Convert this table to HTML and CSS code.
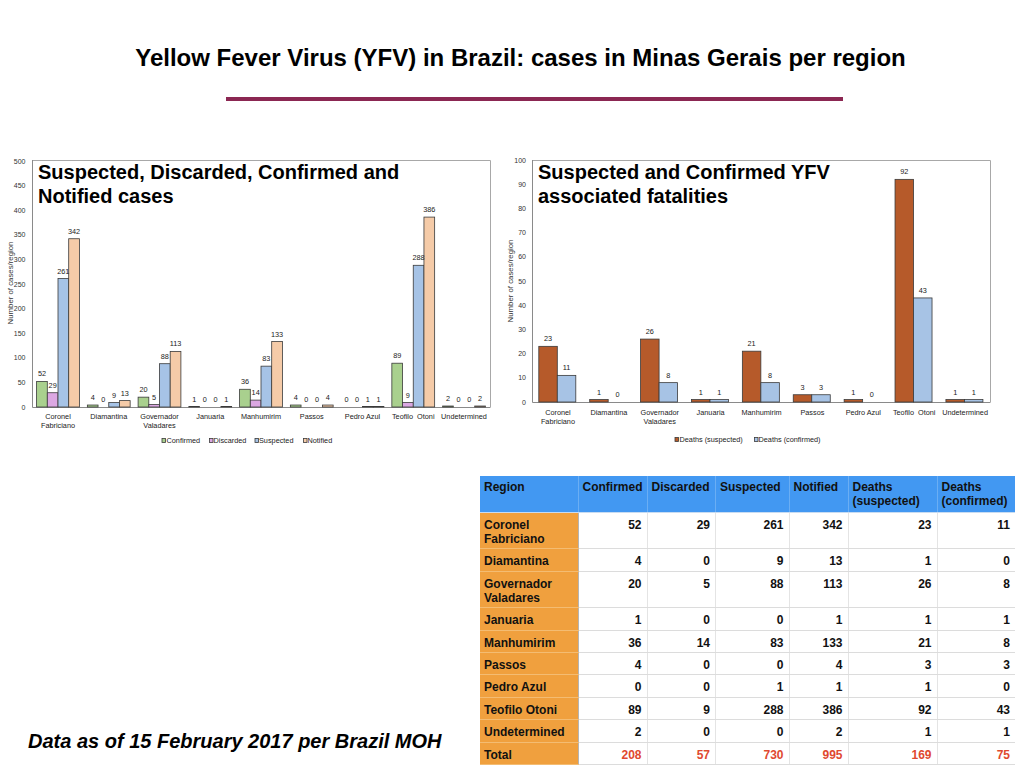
FILE: index.html
```html
<!DOCTYPE html>
<html lang="en">
<head>
<meta charset="utf-8">
<title>Yellow Fever Virus (YFV) in Brazil</title>
<link rel="stylesheet" href="styles.css">
</head>
<body>
<header class="head">
  <h1 class="title">Yellow Fever Virus (YFV) in Brazil: cases in Minas Gerais per region</h1>
  <div class="rule"></div>
</header>

<section class="charts">
  <svg class="chart" width="500" height="300" viewBox="0 150 500 300">
    <line class="frame" x1="32.5" y1="160.5" x2="490.5" y2="160.5"/>
    <line class="frame" x1="490.5" y1="160.5" x2="490.5" y2="407"/>
    <line class="axis" x1="32.5" y1="160" x2="32.5" y2="407.5"/>
    <line class="axis" x1="32.5" y1="407.5" x2="490.5" y2="407.5"/>

    <g class="tick">
      <text x="25.5" y="409.5">0</text>
      <text x="25.5" y="384.9">50</text>
      <text x="25.5" y="360.3">100</text>
      <text x="25.5" y="335.7">150</text>
      <text x="25.5" y="311.1">200</text>
      <text x="25.5" y="286.5">250</text>
      <text x="25.5" y="261.9">300</text>
      <text x="25.5" y="237.3">350</text>
      <text x="25.5" y="212.7">400</text>
      <text x="25.5" y="188.1">450</text>
      <text x="25.5" y="163.5">500</text>
    </g>
    <text class="axt" transform="translate(12.5 283) rotate(-90)">Number of cases/region</text>

    <text class="ttl" x="38" y="179">Suspected, Discarded, Confirmed and</text>
    <text class="ttl" x="38" y="203">Notified cases</text>

    <g class="bars">
      <rect class="c-conf" x="36.6" y="381.42" width="10.7" height="25.58"/>
      <rect class="c-disc" x="47.3" y="392.73" width="10.7" height="14.27"/>
      <rect class="c-susp" x="58.0" y="278.59" width="10.7" height="128.41"/>
      <rect class="c-noti" x="68.7" y="238.74" width="10.7" height="168.26"/>

      <rect class="c-conf" x="87.35" y="405.03" width="10.7" height="1.97"/>
      <rect class="c-susp" x="108.75" y="402.57" width="10.7" height="4.43"/>
      <rect class="c-noti" x="119.45" y="400.6" width="10.7" height="6.4"/>

      <rect class="c-conf" x="138.1" y="397.16" width="10.7" height="9.84"/>
      <rect class="c-disc" x="148.8" y="404.54" width="10.7" height="2.46"/>
      <rect class="c-susp" x="159.5" y="363.7" width="10.7" height="43.3"/>
      <rect class="c-noti" x="170.2" y="351.4" width="10.7" height="55.6"/>

      <rect class="c-conf" x="188.85" y="406.51" width="10.7" height="0.49"/>
      <rect class="c-noti" x="220.95" y="406.51" width="10.7" height="0.49"/>

      <rect class="c-conf" x="239.6" y="389.29" width="10.7" height="17.71"/>
      <rect class="c-disc" x="250.3" y="400.11" width="10.7" height="6.89"/>
      <rect class="c-susp" x="261.0" y="366.16" width="10.7" height="40.84"/>
      <rect class="c-noti" x="271.7" y="341.56" width="10.7" height="65.44"/>

      <rect class="c-conf" x="290.35" y="405.03" width="10.7" height="1.97"/>
      <rect class="c-noti" x="322.45" y="405.03" width="10.7" height="1.97"/>

      <rect class="c-susp" x="362.5" y="406.51" width="10.7" height="0.49"/>
      <rect class="c-noti" x="373.2" y="406.51" width="10.7" height="0.49"/>

      <rect class="c-conf" x="391.85" y="363.21" width="10.7" height="43.79"/>
      <rect class="c-disc" x="402.55" y="402.57" width="10.7" height="4.43"/>
      <rect class="c-susp" x="413.25" y="265.3" width="10.7" height="141.7"/>
      <rect class="c-noti" x="423.95" y="217.09" width="10.7" height="189.91"/>

      <rect class="c-conf" x="442.6" y="406.02" width="10.7" height="0.98"/>
      <rect class="c-noti" x="474.7" y="406.02" width="10.7" height="0.98"/>
    </g>

    <g class="val">
      <text x="41.95" y="376.4">52</text>
      <text x="52.65" y="387.7">29</text>
      <text x="63.35" y="273.6">261</text>
      <text x="74.05" y="233.7">342</text>

      <text x="92.7" y="400">4</text>
      <text x="103.4" y="402">0</text>
      <text x="114.1" y="397.6">9</text>
      <text x="124.8" y="395.6">13</text>

      <text x="143.45" y="392.2">20</text>
      <text x="154.15" y="399.5">5</text>
      <text x="164.85" y="358.7">88</text>
      <text x="175.55" y="346.4">113</text>

      <text x="194.2" y="401.5">1</text>
      <text x="204.9" y="402">0</text>
      <text x="215.6" y="402">0</text>
      <text x="226.3" y="401.5">1</text>

      <text x="244.95" y="384.3">36</text>
      <text x="255.65" y="395.1">14</text>
      <text x="266.35" y="361.2">83</text>
      <text x="277.05" y="336.6">133</text>

      <text x="295.7" y="400">4</text>
      <text x="306.4" y="402">0</text>
      <text x="317.1" y="402">0</text>
      <text x="327.8" y="400">4</text>

      <text x="346.45" y="402">0</text>
      <text x="357.15" y="402">0</text>
      <text x="367.85" y="401.5">1</text>
      <text x="378.55" y="401.5">1</text>

      <text x="397.2" y="358.2">89</text>
      <text x="407.9" y="397.6">9</text>
      <text x="418.6" y="260.3">288</text>
      <text x="429.3" y="212.1">386</text>

      <text x="447.95" y="401">2</text>
      <text x="458.65" y="402">0</text>
      <text x="469.35" y="402">0</text>
      <text x="480.05" y="401">2</text>
    </g>

    <g class="cat">
      <text x="58" y="419">Coronel</text>
      <text x="58" y="428">Fabriciano</text>
      <text x="108.75" y="419">Diamantina</text>
      <text x="159.5" y="419">Governador</text>
      <text x="159.5" y="428">Valadares</text>
      <text x="210.25" y="419">Januaria</text>
      <text x="261" y="419">Manhumirim</text>
      <text x="311.75" y="419">Passos</text>
      <text x="362.5" y="419">Pedro Azul</text>
      <text x="413.25" y="419">Teofilo  Otoni</text>
      <text x="464" y="419">Undetermined</text>
    </g>

    <g class="leg">
      <rect class="c-conf" x="162" y="438.5" width="3.5" height="4"/>
      <text x="166.5" y="443">Confirmed</text>
      <rect class="c-disc" x="209.5" y="438.5" width="3.5" height="4"/>
      <text x="213.5" y="443">Discarded</text>
      <rect class="c-susp" x="255" y="438.5" width="3.5" height="4"/>
      <text x="259" y="443">Suspected</text>
      <rect class="c-noti" x="303.5" y="438.5" width="3.5" height="4"/>
      <text x="307.5" y="443">Notified</text>
    </g>
  </svg>

  <svg class="chart" width="510" height="300" viewBox="500 150 510 300">
    <line class="frame" x1="532.5" y1="160.5" x2="990.5" y2="160.5"/>
    <line class="frame" x1="990.5" y1="160.5" x2="990.5" y2="402"/>
    <line class="axis" x1="532.5" y1="160" x2="532.5" y2="402.5"/>
    <line class="axis" x1="532.5" y1="402.5" x2="990.5" y2="402.5"/>

    <g class="tick">
      <text x="526" y="404.5">0</text>
      <text x="526" y="380.3">10</text>
      <text x="526" y="356.1">20</text>
      <text x="526" y="331.9">30</text>
      <text x="526" y="307.7">40</text>
      <text x="526" y="283.5">50</text>
      <text x="526" y="259.3">60</text>
      <text x="526" y="235.1">70</text>
      <text x="526" y="210.9">80</text>
      <text x="526" y="186.7">90</text>
      <text x="526" y="162.5">100</text>
    </g>
    <text class="axt" transform="translate(512.5 281) rotate(-90)">Number of cases/region</text>

    <text class="ttl" x="538" y="179">Suspected and Confirmed YFV</text>
    <text class="ttl" x="538" y="203">associated fatalities</text>

    <g class="bars">
      <rect class="d-susp" x="538.8" y="346.34" width="18.5" height="55.66"/>
      <rect class="d-conf" x="557.3" y="375.38" width="18.5" height="26.62"/>

      <rect class="d-susp" x="589.69" y="399.58" width="18.5" height="2.42"/>

      <rect class="d-susp" x="640.58" y="339.08" width="18.5" height="62.92"/>
      <rect class="d-conf" x="659.08" y="382.64" width="18.5" height="19.36"/>

      <rect class="d-susp" x="691.47" y="399.58" width="18.5" height="2.42"/>
      <rect class="d-conf" x="709.97" y="399.58" width="18.5" height="2.42"/>

      <rect class="d-susp" x="742.36" y="351.18" width="18.5" height="50.82"/>
      <rect class="d-conf" x="760.86" y="382.64" width="18.5" height="19.36"/>

      <rect class="d-susp" x="793.25" y="394.74" width="18.5" height="7.26"/>
      <rect class="d-conf" x="811.75" y="394.74" width="18.5" height="7.26"/>

      <rect class="d-susp" x="844.14" y="399.58" width="18.5" height="2.42"/>

      <rect class="d-susp" x="895.03" y="179.36" width="18.5" height="222.64"/>
      <rect class="d-conf" x="913.53" y="297.94" width="18.5" height="104.06"/>

      <rect class="d-susp" x="945.92" y="399.58" width="18.5" height="2.42"/>
      <rect class="d-conf" x="964.42" y="399.58" width="18.5" height="2.42"/>
    </g>

    <g class="val">
      <text x="548.05" y="341.3">23</text>
      <text x="566.55" y="370.4">11</text>
      <text x="598.94" y="394.6">1</text>
      <text x="617.44" y="397">0</text>
      <text x="649.83" y="334.1">26</text>
      <text x="668.33" y="377.6">8</text>
      <text x="700.72" y="394.6">1</text>
      <text x="719.22" y="394.6">1</text>
      <text x="751.61" y="346.2">21</text>
      <text x="770.11" y="377.6">8</text>
      <text x="802.5" y="389.7">3</text>
      <text x="821" y="389.7">3</text>
      <text x="853.39" y="394.6">1</text>
      <text x="871.89" y="397">0</text>
      <text x="904.28" y="174.4">92</text>
      <text x="922.78" y="292.9">43</text>
      <text x="955.17" y="394.6">1</text>
      <text x="973.67" y="394.6">1</text>
    </g>

    <g class="cat">
      <text x="557.95" y="415">Coronel</text>
      <text x="557.95" y="424">Fabriciano</text>
      <text x="608.84" y="415">Diamantina</text>
      <text x="659.73" y="415">Governador</text>
      <text x="659.73" y="424">Valadares</text>
      <text x="710.62" y="415">Januaria</text>
      <text x="761.51" y="415">Manhumirim</text>
      <text x="812.4" y="415">Passos</text>
      <text x="863.29" y="415">Pedro Azul</text>
      <text x="914.18" y="415">Teofilo  Otoni</text>
      <text x="965.07" y="415">Undetermined</text>
    </g>

    <g class="leg">
      <rect class="d-susp" x="675" y="437.5" width="3.5" height="4"/>
      <text x="679.5" y="442">Deaths (suspected)</text>
      <rect class="d-conf" x="754.5" y="437.5" width="3.5" height="4"/>
      <text x="758.5" y="442">Deaths (confirmed)</text>
    </g>
  </svg>
</section>

<section class="bottom">
  <p class="note">Data as of 15 February 2017 per Brazil MOH</p>
  <table class="data">
    <colgroup>
      <col class="w-region">
      <col class="w-conf">
      <col class="w-disc">
      <col class="w-susp">
      <col class="w-noti">
      <col class="w-ds">
      <col class="w-dc">
    </colgroup>
    <thead>
      <tr>
        <th>Region</th>
        <th>Confirmed</th>
        <th>Discarded</th>
        <th>Suspected</th>
        <th>Notified</th>
        <th>Deaths (suspected)</th>
        <th>Deaths (confirmed)</th>
      </tr>
    </thead>
    <tbody>
      <tr><th>Coronel Fabriciano</th><td>52</td><td>29</td><td>261</td><td>342</td><td>23</td><td>11</td></tr>
      <tr><th>Diamantina</th><td>4</td><td>0</td><td>9</td><td>13</td><td>1</td><td>0</td></tr>
      <tr><th>Governador Valadares</th><td>20</td><td>5</td><td>88</td><td>113</td><td>26</td><td>8</td></tr>
      <tr><th>Januaria</th><td>1</td><td>0</td><td>0</td><td>1</td><td>1</td><td>1</td></tr>
      <tr><th>Manhumirim</th><td>36</td><td>14</td><td>83</td><td>133</td><td>21</td><td>8</td></tr>
      <tr><th>Passos</th><td>4</td><td>0</td><td>0</td><td>4</td><td>3</td><td>3</td></tr>
      <tr><th>Pedro Azul</th><td>0</td><td>0</td><td>1</td><td>1</td><td>1</td><td>0</td></tr>
      <tr><th>Teofilo Otoni</th><td>89</td><td>9</td><td>288</td><td>386</td><td>92</td><td>43</td></tr>
      <tr><th>Undetermined</th><td>2</td><td>0</td><td>0</td><td>2</td><td>1</td><td>1</td></tr>
      <tr class="total"><th>Total</th><td>208</td><td>57</td><td>730</td><td>995</td><td>169</td><td>75</td></tr>
    </tbody>
  </table>
</section>
</body>
</html>
```

FILE: styles.css
```css
html, body {
  margin: 0;
  padding: 0;
  background: #ffffff;
}

body {
  width: 1024px;
  height: 768px;
  overflow: hidden;
  font-family: "Liberation Sans", Arial, sans-serif;
  color: #000;
}

.head {
  display: block;
}

.title {
  margin: 0;
  padding: 44px 0 0 17px;
  font-size: 24px;
  line-height: 28px;
  font-weight: bold;
  text-align: center;
}

.rule {
  width: 617px;
  height: 4px;
  margin: 25px 0 0 226px;
  background: #8b2752;
}

.charts {
  display: flex;
  margin-top: 49px;
}

.chart {
  display: block;
  flex: none;
}

.chart text {
  font-family: "Liberation Sans", Arial, sans-serif;
  fill: #1a1a1a;
  font-size: 7.3px;
}

.chart .frame {
  stroke: #a8a8a8;
  stroke-width: 1;
}

.chart .axis {
  stroke: #8a8a8a;
  stroke-width: 1;
}

.chart .tick text {
  text-anchor: end;
  font-size: 7px;
  fill: #333;
}

.chart .axt {
  text-anchor: middle;
  font-size: 7.8px;
  fill: #333;
}

.chart .ttl {
  font-size: 20px;
  font-weight: bold;
  fill: #000;
}

.chart .val text {
  text-anchor: middle;
  fill: #222;
}

.chart .cat text {
  text-anchor: middle;
  fill: #222;
  white-space: pre;
}

.chart .leg text {
  fill: #222;
}

.bars rect,
.leg rect {
  stroke: #3a3a3a;
  stroke-width: 0.8;
}

.c-conf { fill: #a9d08e; }
.c-disc { fill: #dba7e2; }
.c-susp { fill: #a6c3e6; }
.c-noti { fill: #f5cba8; }
.d-susp { fill: #b65a2a; }
.d-conf { fill: #a7c3e5; }

.bottom {
  display: flex;
  align-items: flex-end;
  margin-top: 26px;
}

.note {
  flex: 0 0 452px;
  margin: 0 0 12px 0;
  padding-left: 28px;
  font-size: 20px;
  line-height: 24px;
  font-weight: bold;
  font-style: italic;
}

.data {
  flex: none;
  width: 535px;
  border-collapse: collapse;
  table-layout: fixed;
  font-size: 12px;
  line-height: 14px;
  font-weight: bold;
  color: #111;
}

.w-region { width: 98px; }
.w-conf { width: 69px; }
.w-disc { width: 68.5px; }
.w-susp { width: 73.5px; }
.w-noti { width: 59px; }
.w-ds { width: 89px; }
.w-dc { width: 78px; }

.data thead th {
  background: #4298f2;
  text-align: left;
  vertical-align: top;
  height: 28px;
  padding: 4px 3px 4px 4px;
  border-right: 1px solid #6aaef4;
  border-bottom: 1px solid #c8dcf2;
  font-weight: bold;
}

.data thead th:last-child {
  border-right: none;
}

.data tbody th {
  background: #f0a03e;
  text-align: left;
  vertical-align: top;
  padding: 5px 4px 2.4px 4px;
  border-bottom: 1px solid #f4bc72;
  border-right: 1px solid #b4b4b4;
  font-weight: bold;
}

.data td {
  text-align: right;
  vertical-align: top;
  padding: 5px 5px 2.4px 4px;
  border-bottom: 1px solid #dcdcdc;
  border-right: 1px solid #e4e4e4;
}

.data td:last-child {
  border-right: none;
}

.data .total td {
  color: #e0492f;
}
```
